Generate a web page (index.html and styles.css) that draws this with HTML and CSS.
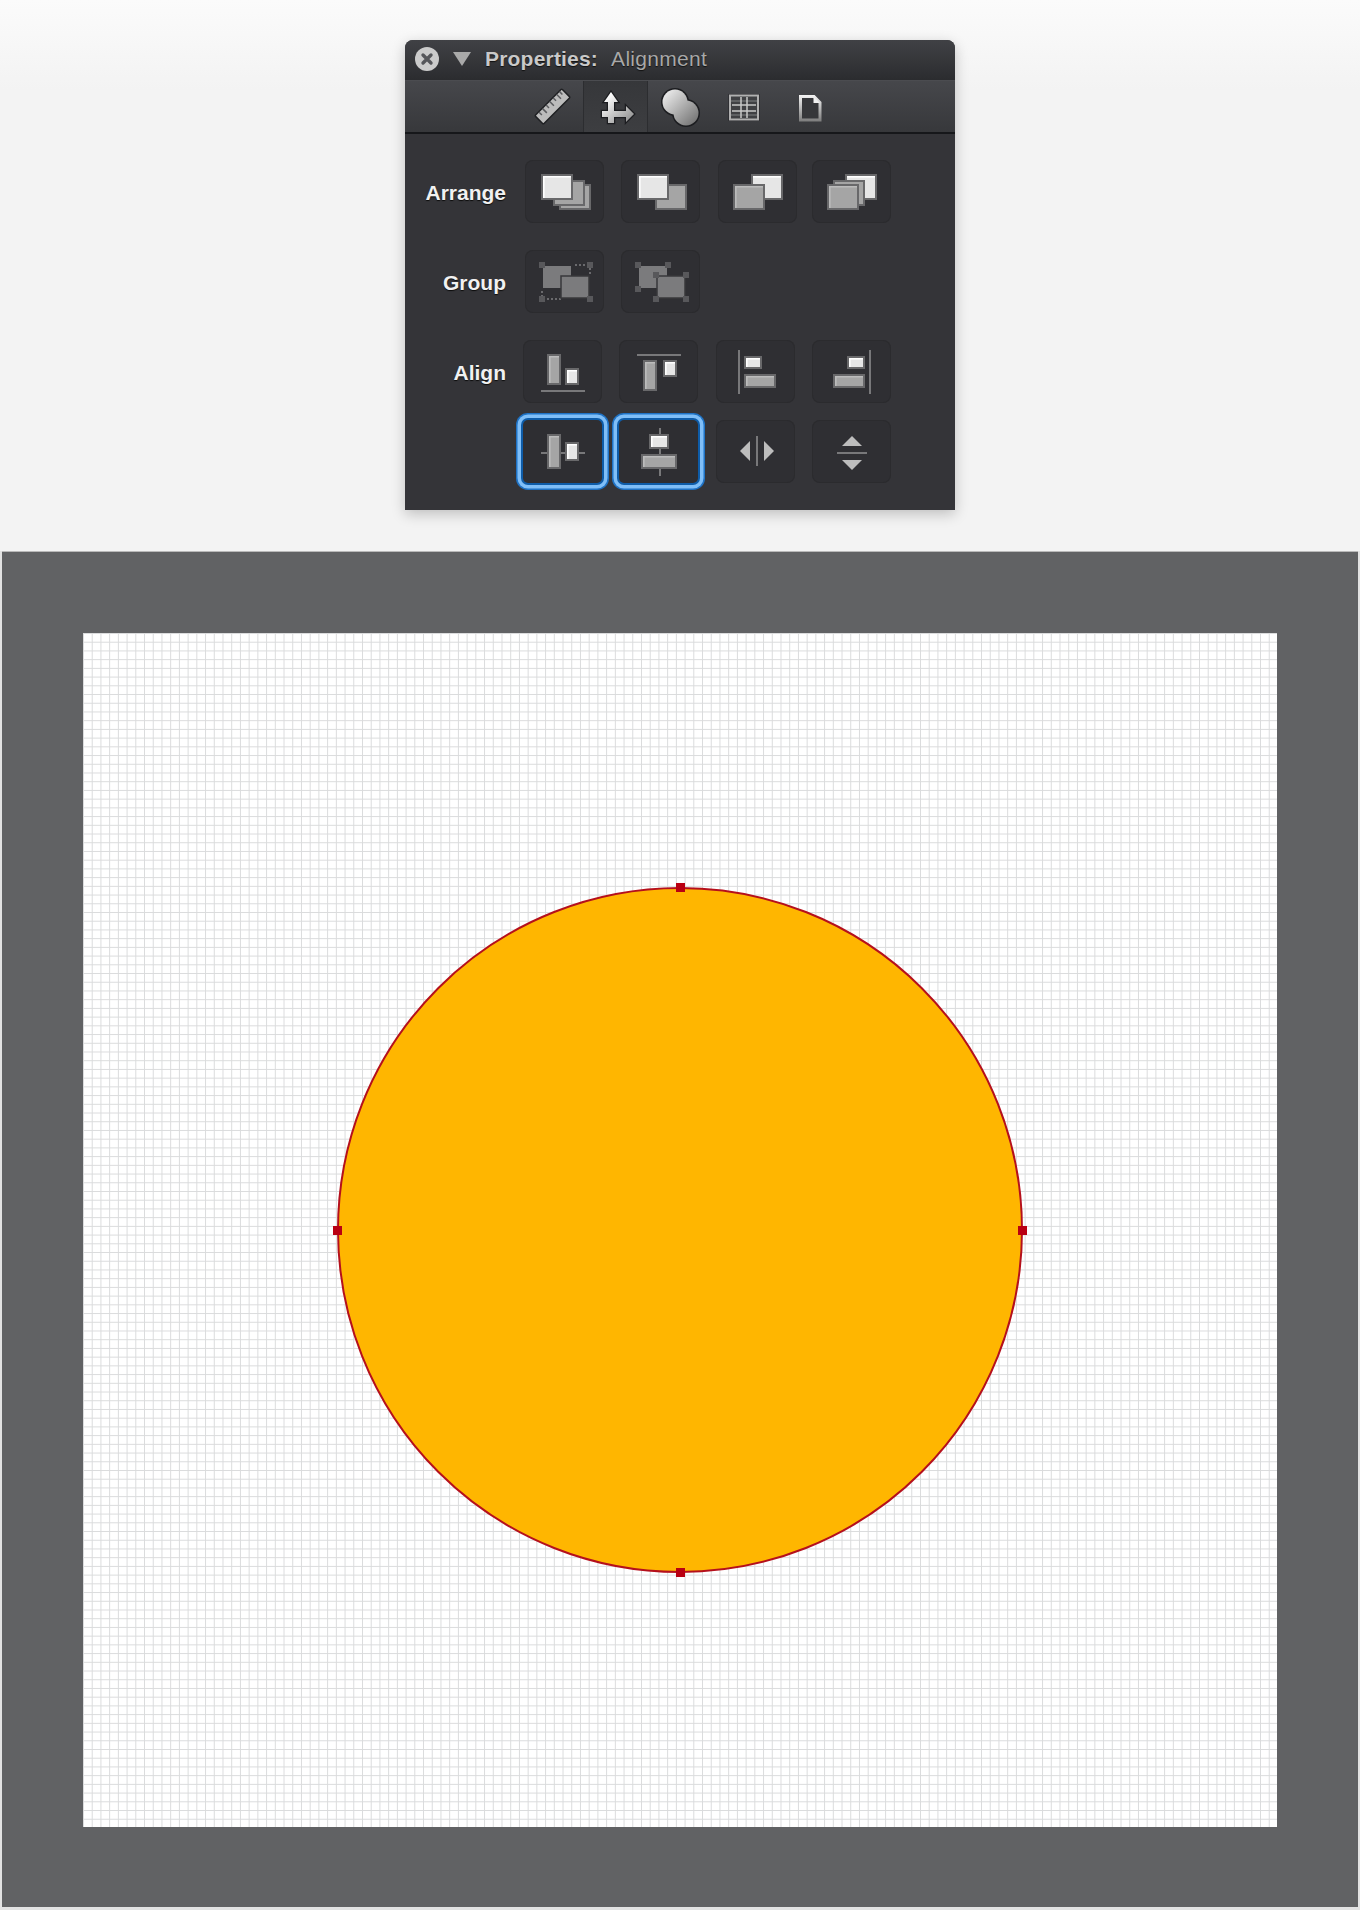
FILE: index.html
```html
<!DOCTYPE html>
<html lang="en">
<head>
<meta charset="UTF-8">
<meta name="viewport" content="width=device-width, initial-scale=1.0">
<title>Properties: Alignment</title>
<link rel="stylesheet" href="styles.css">
</head>
<body>
<div class="top">
    <div class="panel">
        <div class="titlebar">
            <span class="close">
                <svg width="24" height="24" viewBox="0 0 24 24"><path class="close-x" d="M8 8l8 8M16 8l-8 8"/></svg>
            </span>
            <span class="disclosure"></span>
            <span class="title-strong">Properties:</span>
            <span class="title-light">Alignment</span>
        </div>
        <div class="toolbar">
            <div class="tab">
                <svg width="64" height="51" viewBox="0 0 64 51">
                    <g transform="rotate(-45 33.5 25.5)">
                        <rect class="ruler" x="14.5" y="19.5" width="38" height="12" rx="1"/>
                        <path class="ruler-ticks" d="M20 20v4M25 20v6M30 20v4M35 20v6M40 20v4M45 20v6M49 20v4"/>
                    </g>
                </svg>
            </div>
            <div class="tab active">
                <svg width="64" height="51" viewBox="0 0 64 51">
                    <defs>
                        <linearGradient id="moveGrad" x1="0" y1="0" x2="0.9" y2="1">
                            <stop offset="0.15" stop-color="#ffffff"/>
                            <stop offset="1" stop-color="#8c8c8c"/>
                        </linearGradient>
                    </defs>
                    <path class="move" d="M28 11L35 21H31V30H43V25L51 33L43 41V36H31V42H25V36H19V30H25V21H21Z"/>
                </svg>
            </div>
            <div class="tab">
                <svg width="64" height="51" viewBox="0 0 64 51">
                    <defs>
                        <linearGradient id="blobGrad" gradientUnits="userSpaceOnUse" x1="18" y1="12" x2="48" y2="42">
                            <stop offset="0" stop-color="#e8e8e8"/>
                            <stop offset="1" stop-color="#747474"/>
                        </linearGradient>
                    </defs>
                    <circle class="blob-edge" cx="27" cy="21" r="12.5"/>
                    <circle class="blob-edge" cx="38" cy="32" r="12.5"/>
                    <circle class="blob" cx="27" cy="21" r="12.5"/>
                    <circle class="blob" cx="38" cy="32" r="12.5"/>
                </svg>
            </div>
            <div class="tab">
                <svg width="64" height="51" viewBox="0 0 64 51">
                    <rect class="table-edge" x="17" y="13.5" width="30" height="26"/>
                    <rect class="table-box" x="18" y="14.5" width="28" height="24"/>
                    <path class="table-faint" d="M19 20h26M19 34h26"/>
                    <path class="table-lines" d="M29 16v21M35 16v21M20 24h24M20 30h24"/>
                </svg>
            </div>
            <div class="tab">
                <svg width="64" height="51" viewBox="0 0 64 51">
                    <defs>
                        <linearGradient id="docGrad" gradientUnits="userSpaceOnUse" x1="0" y1="14" x2="0" y2="41">
                            <stop offset="0" stop-color="#f4f4f4"/>
                            <stop offset="1" stop-color="#7a7a7a"/>
                        </linearGradient>
                    </defs>
                    <path class="doc" d="M23.5 15.5H37L43 21.5V39H23.5Z"/>
                    <path class="doc-fold" d="M36.5 15.5V22H43Z"/>
                </svg>
            </div>
        </div>
        <div class="panel-body">
            <div class="row">
                <div class="label">Arrange</div>
                <div class="btns">
                    <div class="btn">
                        <svg width="79" height="63" viewBox="0 0 79 63">
                            <rect class="card-md" x="35" y="25" width="30" height="24"/>
                            <rect class="card-md" x="29" y="21" width="30" height="24"/>
                            <rect class="card-lt" x="17" y="15" width="30" height="24"/>
                            <path class="hi-lt" d="M18.8 38V16.8H46"/>
                        </svg>
                    </div>
                    <div class="btn">
                        <svg width="79" height="63" viewBox="0 0 79 63">
                            <rect class="card-md" x="35" y="25" width="30" height="24"/>
                            <rect class="card-lt" x="17" y="15" width="30" height="24"/>
                            <path class="hi-lt" d="M18.8 38V16.8H46"/>
                        </svg>
                    </div>
                    <div class="btn">
                        <svg width="79" height="63" viewBox="0 0 79 63">
                            <rect class="card-lt" x="34" y="15" width="30" height="24"/>
                            <path class="hi-lt" d="M35 16.8H63"/>
                            <rect class="card-md" x="16" y="25" width="30" height="24"/>
                            <path class="hi-md" d="M17.8 48V26.8H45"/>
                        </svg>
                    </div>
                    <div class="btn">
                        <svg width="79" height="63" viewBox="0 0 79 63">
                            <rect class="card-lt" x="34" y="15" width="30" height="24"/>
                            <path class="hi-lt" d="M35 16.8H63"/>
                            <rect class="card-md" x="22" y="21" width="30" height="24"/>
                            <rect class="card-md" x="16" y="25" width="30" height="24"/>
                            <path class="hi-md" d="M17.8 48V26.8H45"/>
                        </svg>
                    </div>
                </div>
            </div>
            <div class="row">
                <div class="label">Group</div>
                <div class="btns">
                    <div class="btn">
                        <svg width="79" height="63" viewBox="0 0 79 63">
                            <path class="dots" d="M50 15H62M65 18V26M17 41V46M22 49H36"/>
                            <rect class="grp" x="18" y="16" width="28" height="22"/>
                            <rect class="grp grp-top" x="36" y="26" width="28" height="22"/>
                            <rect class="grip" x="14" y="12" width="6" height="6"/>
                            <rect class="grip" x="62" y="12" width="6" height="6"/>
                            <rect class="grip" x="14" y="46" width="6" height="6"/>
                            <rect class="grip" x="62" y="46" width="6" height="6"/>
                        </svg>
                    </div>
                    <div class="btn">
                        <svg width="79" height="63" viewBox="0 0 79 63">
                            <rect class="grp" x="18" y="16" width="28" height="22"/>
                            <rect class="grip" x="14" y="12" width="6" height="6"/>
                            <rect class="grip" x="44" y="12" width="6" height="6"/>
                            <rect class="grip" x="14" y="36" width="6" height="6"/>
                            <rect class="grp grp-top" x="36" y="26" width="28" height="22"/>
                            <rect class="grip" x="32" y="22" width="6" height="6"/>
                            <rect class="grip" x="62" y="22" width="6" height="6"/>
                            <rect class="grip" x="32" y="46" width="6" height="6"/>
                            <rect class="grip" x="62" y="46" width="6" height="6"/>
                        </svg>
                    </div>
                </div>
            </div>
            <div class="align-block">
                <div class="row">
                    <div class="label">Align</div>
                    <div class="btns align-btns">
                        <div class="btn">
                            <svg width="78" height="63" viewBox="0 0 78 63">
                                <path class="guide" d="M17 51H61"/>
                                <rect class="card-md" x="24" y="15" width="12" height="29"/>
                                <path class="hi-md" d="M25.8 43V16.8H35"/>
                                <rect class="card-lt" x="42" y="29" width="12" height="15"/>
                                <path class="hi-lt" d="M43.8 43V30.8H53"/>
                            </svg>
                        </div>
                        <div class="btn">
                            <svg width="78" height="63" viewBox="0 0 78 63">
                                <path class="guide" d="M17 15H61"/>
                                <rect class="card-md" x="24" y="21" width="12" height="29"/>
                                <path class="hi-md" d="M25.8 49V22.8H35"/>
                                <rect class="card-lt" x="44" y="21" width="12" height="15"/>
                                <path class="hi-lt" d="M45.8 35V22.8H55"/>
                            </svg>
                        </div>
                        <div class="btn">
                            <svg width="78" height="63" viewBox="0 0 78 63">
                                <path class="guide" d="M22 10V54"/>
                                <rect class="card-lt" x="28" y="17" width="16" height="11"/>
                                <path class="hi-lt" d="M29.8 27V18.8H43"/>
                                <rect class="card-md" x="28" y="35" width="30" height="12"/>
                                <path class="hi-md" d="M29.8 46V36.8H57"/>
                            </svg>
                        </div>
                        <div class="btn">
                            <svg width="78" height="63" viewBox="0 0 78 63">
                                <path class="guide" d="M58 10V54"/>
                                <rect class="card-lt" x="36" y="17" width="16" height="11"/>
                                <path class="hi-lt" d="M37.8 27V18.8H51"/>
                                <rect class="card-md" x="22" y="35" width="30" height="12"/>
                                <path class="hi-md" d="M23.8 46V36.8H51"/>
                            </svg>
                        </div>
                    </div>
                </div>
                <div class="row">
                    <div class="label"></div>
                    <div class="btns align-btns">
                        <div class="btn selected">
                            <svg width="78" height="63" viewBox="0 0 78 63">
                                <path class="guide" d="M17 33H61"/>
                                <rect class="card-md" x="24" y="15" width="12" height="33"/>
                                <path class="hi-md" d="M25.8 47V16.8H35"/>
                                <rect class="card-lt" x="42" y="23" width="12" height="17"/>
                                <path class="hi-lt" d="M43.8 39V24.8H53"/>
                            </svg>
                        </div>
                        <div class="btn selected">
                            <svg width="78" height="63" viewBox="0 0 78 63">
                                <path class="guide" d="M40 8V56"/>
                                <rect class="card-lt" x="30" y="15" width="18" height="13"/>
                                <path class="hi-lt" d="M31.8 27V16.8H47"/>
                                <rect class="card-md" x="22" y="35" width="34" height="13"/>
                                <path class="hi-md" d="M23.8 47V36.8H55"/>
                            </svg>
                        </div>
                        <div class="btn">
                            <svg width="78" height="63" viewBox="0 0 78 63">
                                <path class="guide" d="M40 16V46"/>
                                <path class="tri" d="M33 21V41L23 31Z"/>
                                <path class="tri" d="M47 21V41L57 31Z"/>
                            </svg>
                        </div>
                        <div class="btn">
                            <svg width="78" height="63" viewBox="0 0 78 63">
                                <path class="guide" d="M25 33H55"/>
                                <path class="tri" d="M40 16L30 26H50Z"/>
                                <path class="tri" d="M30 40H50L40 50Z"/>
                            </svg>
                        </div>
                    </div>
                </div>
            </div>
        </div>
    </div>
</div>
<div class="canvas">
    <div class="artboard">
        <div class="shape">
            <span class="handle handle-top"></span>
            <span class="handle handle-left"></span>
            <span class="handle handle-right"></span>
            <span class="handle handle-bottom"></span>
        </div>
    </div>
</div>
</body>
</html>
```

FILE: styles.css
```css
body {
    margin: 0;
    padding: 0;
    background: #e2e2e2;
    font-family: "Liberation Sans", Arial, sans-serif;
}
.top {
    height: 551px;
    padding-top: 40px;
    box-sizing: border-box;
    background: linear-gradient(#fbfbfb, #f3f3f3 90px);
}
.panel {
    width: 550px;
    margin: 0 auto;
    border-radius: 8px 8px 0 0;
    background: #343438;
    box-shadow: 0 4px 14px rgba(0, 0, 0, 0.22);
}
.titlebar {
    display: flex;
    align-items: center;
    height: 40px;
    padding: 0 0 2px 10px;
    box-sizing: border-box;
    border-radius: 8px 8px 0 0;
    background: linear-gradient(#404145, #2b2c2f);
    font-size: 21px;
}
.close {
    width: 24px;
    height: 24px;
    border-radius: 50%;
    background: #cbcbcb;
}
.close svg {
    display: block;
}
.close-x {
    fill: none;
    stroke: #55565a;
    stroke-width: 3.4;
    stroke-linecap: round;
}
.disclosure {
    width: 0;
    height: 0;
    margin-left: 14px;
    border-left: 9px solid transparent;
    border-right: 9px solid transparent;
    border-top: 14px solid #a9a9a9;
}
.title-strong {
    margin-left: 14px;
    font-weight: bold;
    color: #c9c9c9;
    letter-spacing: 0.2px;
    text-shadow: 0 1px 1px #111;
}
.title-light {
    margin-left: 13px;
    color: #a8a8a8;
    letter-spacing: 0.3px;
    text-shadow: 0 1px 1px #111;
}
.toolbar {
    display: flex;
    justify-content: center;
    height: 51px;
    border-top: 1px solid #4b4c50;
    border-bottom: 2px solid #16171a;
    background: linear-gradient(#46474b, #37383b);
}
.tab {
    width: 64.5px;
}
.tab svg {
    display: block;
}
.tab.active {
    background: linear-gradient(#36373a, #3d3e41);
    box-shadow: inset 1px 0 0 #2c2d30, inset -1px 0 0 #2c2d30;
}
.ruler {
    fill: #bcbcbc;
    stroke: #1f2023;
    stroke-width: 1.5;
}
.ruler-ticks {
    fill: none;
    stroke: #5c5d60;
    stroke-width: 1.5;
}
.move {
    fill: url(#moveGrad);
    stroke: #1c1d20;
    stroke-width: 2.5;
    paint-order: stroke;
}
.blob-edge {
    fill: none;
    stroke: #1c1d20;
    stroke-width: 3;
}
.blob {
    fill: url(#blobGrad);
}
.table-edge {
    fill: none;
    stroke: #222326;
    stroke-width: 1;
}
.table-box {
    fill: #3f4043;
    stroke: #b0b0b0;
    stroke-width: 2;
}
.table-faint {
    fill: none;
    stroke: #6a6b6d;
    stroke-width: 1.5;
}
.table-lines {
    fill: none;
    stroke: #c8c8c8;
    stroke-width: 1.5;
}
.doc {
    fill: #36373a;
    stroke: url(#docGrad);
    stroke-width: 3;
}
.doc-fold {
    fill: #f0f0f0;
}
.panel-body {
    display: flex;
    flex-direction: column;
    gap: 26px;
    padding: 26px 0;
}
.align-block {
    display: flex;
    flex-direction: column;
    gap: 16px;
}
.row {
    display: flex;
    align-items: center;
    height: 64px;
}
.label {
    width: 101px;
    padding-top: 2px;
    text-align: right;
    font-size: 21px;
    font-weight: bold;
    color: #f1f1f1;
    text-shadow: 0 1px 1px #0c0c0c;
}
.btns {
    display: grid;
    grid-template-columns: 96px 97px 94px 79px;
    align-self: flex-start;
    margin-left: 19px;
}
.align-btns {
    grid-template-columns: 96px 96.5px 96.5px 79px;
    margin-left: 17px;
}
.btn {
    width: 79px;
    height: 63px;
    border-radius: 8px;
    background: #2f2f33;
    box-shadow: inset 0 0 0 1px #2b2b2e;
}
.btn svg {
    display: block;
}
.align-btns .btn svg {
    margin-left: 1px;
}
.align-btns .btn:last-child svg {
    margin-left: 0;
}
.btn.selected {
    border-radius: 5px;
    background: #2e2e32;
    box-shadow: 0 0 0 2px #0e5ca8, 0 0 0 5.5px #7fbef7, 0 0 0 7px #1f72c4;
}
.card-lt, .card-md {
    stroke: #68686a;
    stroke-width: 2;
}
.card-lt {
    fill: #e6e6e6;
}
.card-md {
    fill: #a5a5a5;
}
.hi-lt, .hi-md {
    fill: none;
    stroke-width: 1.6;
}
.hi-lt {
    stroke: #ffffff;
}
.hi-md {
    stroke: #bcbcbc;
}
.grp {
    fill: #7b7b7d;
}
.grp-top {
    stroke: #38383b;
    stroke-width: 1.5;
}
.grip {
    fill: #58585b;
}
.dots {
    fill: none;
    stroke: #6a6a6d;
    stroke-width: 2;
    stroke-dasharray: 2 2;
}
.guide {
    fill: none;
    stroke: #78787a;
    stroke-width: 2;
}
.tri {
    fill: #bdbdbd;
}
.canvas {
    width: 1356px;
    height: 1356px;
    margin: 0 2px;
    padding: 81px;
    box-sizing: border-box;
    border-top: 1px solid #b9b9b9;
    background: #616264;
}
.artboard {
    position: relative;
    width: 1194px;
    height: 1194px;
    background-color: #fff;
    background-image:
        linear-gradient(to right, #dadbdc 1px, transparent 1px),
        linear-gradient(to bottom, #dadbdc 1px, transparent 1px);
    background-size: 8.72px 8.72px;
}
.shape {
    position: absolute;
    left: 254px;
    top: 254px;
    width: 686px;
    height: 686px;
    box-sizing: border-box;
    border: 2px solid #b5101c;
    border-radius: 50%;
    background: #ffb600;
}
.handle {
    position: absolute;
    width: 9px;
    height: 9px;
    background: #b90012;
}
.handle-top {
    left: calc(50% - 4.5px);
    top: -6.5px;
}
.handle-bottom {
    left: calc(50% - 4.5px);
    bottom: -5.5px;
}
.handle-left {
    left: -6.5px;
    top: calc(50% - 4.5px);
}
.handle-right {
    right: -5.5px;
    top: calc(50% - 4.5px);
}
```
